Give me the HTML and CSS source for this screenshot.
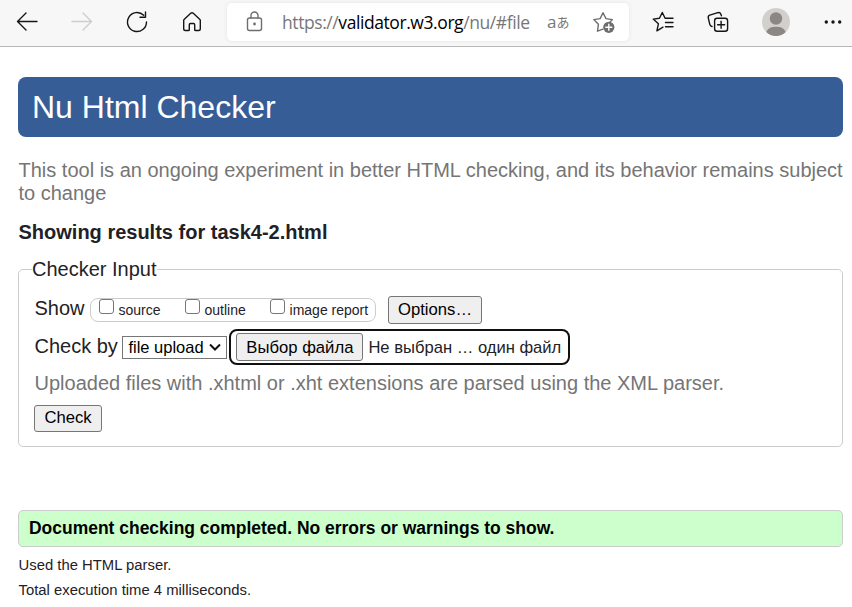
FILE: index.html
```html
<!DOCTYPE html>
<html lang="en">
<head>
<meta charset="utf-8">
<title>Nu Html Checker</title>
<link rel="stylesheet" href="styles.css">
</head>
<body>
<header class="toolbar">
  <nav class="nav">
    <svg class="icon" viewBox="0 0 24 24"><path d="M22 11.5H2.5M11 3l-8.500 8.500L11 20"/></svg>
    <svg class="icon faded" viewBox="0 0 24 24"><path d="M2 11.500h19.500M13 3l8.500 8.500L13 20"/></svg>
    <svg class="icon" viewBox="0 0 24 24"><path d="M21.500 12a9.500 9.500 0 1 1-2.800-6.700M20.500 2v5.200h-5.500"/></svg>
    <svg class="icon" viewBox="0 0 24 24"><path d="M3.700 10.500q0-.8.6-1.300L11 3.100q1-.8 2 0l6.700 6.100q.6.500.6 1.300V19q0 1.500-1.500 1.500H15.500q-.8 0-.8-.8v-5q0-1.200-1.200-1.200h-3q-1.200 0-1.200 1.200v5q0 .8-.8.8H5.200q-1.500 0-1.500-1.500z"/></svg>
  </nav>
  <div class="address">
    <svg class="icon grey" viewBox="0 0 24 24"><rect x="4.500" y="8" width="14" height="12.500" rx="2"/><path d="M8 8V5.500a3.500 3.500 0 0 1 7 0V8"/><circle class="solid" cx="11.500" cy="14" r="1.400"/></svg>
    <span class="url"><span>https://</span><b>validator.w3.org</b><span>/nu/#file</span></span>
    <span class="translate"><span>a</span><span class="kana">あ</span></span>
    <svg class="icon grey star" viewBox="0 0 24 24"><path d="M11 19.200l-5.500 2 .9-6.900L1.800 9.600l6.300-1L11 2.700l3 5.900 6.400 1-3 3.100"/><circle class="solid" cx="16.800" cy="17.300" r="5.600"/><path class="plus" d="M16.800 14.300v6M13.800 17.300h6"/></svg>
  </div>
  <div class="actions">
    <svg class="icon" viewBox="0 0 24 24"><path d="M12 17.200l-6.100 3.600 1.500-7L2.200 9.100l6.200-.8L11.300 2.500l2.800 5.800H22M14.500 12.500H22M14.500 16.700H22"/></svg>
    <svg class="icon" viewBox="0 0 24 24"><rect x="8.600" y="8.200" width="13" height="13" rx="2.500"/><path d="M15.100 11.200v7M11.600 14.700h7M6 16.500q-1.800-.5-2.200-2.100L2.300 8Q1.800 6 3.800 5.200l8-2.500q2.200-.6 3 1.400l.6 1.700"/></svg>
    <svg class="avatar" viewBox="0 0 28 28"><circle cx="14" cy="14" r="14" fill="#d2d0cc"/><circle cx="14" cy="10.500" r="6.200" fill="#8b8784"/><path d="M4.300 24a10 7 0 0 1 19.400 0A14 14 0 0 1 4.300 24z" fill="#8b8784"/></svg>
    <svg class="icon more" viewBox="0 0 24 24"><g class="solid"><circle cx="5.300" cy="12" r="1.700"/><circle cx="12" cy="12" r="1.700"/><circle cx="18.700" cy="12" r="1.700"/></g></svg>
  </div>
</header>
<main>
  <h1>Nu Html Checker</h1>
  <p class="intro">This tool is an ongoing experiment in better HTML checking, and its behavior remains subject to change</p>
  <h2>Showing results for task4-2.html</h2>
  <fieldset>
    <legend>Checker Input</legend>
    <div class="row show">
      <span class="label">Show</span>
      <div class="checks">
        <label><input type="checkbox">source</label>
        <label><input type="checkbox">outline</label>
        <label><input type="checkbox">image report</label>
      </div>
      <button class="options">Options…</button>
    </div>
    <div class="row by">
      <span class="label">Check by</span>
      <div class="select">file upload<svg viewBox="0 0 12 8"><path d="M1 1.500l5 5 5-5"/></svg></div>
      <div class="file"><button>Выбор файла</button><span>Не выбран … один файл</span></div>
    </div>
    <p class="hint">Uploaded files with .xhtml or .xht extensions are parsed using the XML parser.</p>
    <button class="check">Check</button>
  </fieldset>
  <p class="success">Document checking completed. No errors or warnings to show.</p>
  <p class="stat">Used the HTML parser.</p>
  <p class="stat">Total execution time 4 milliseconds.</p>
</main>
</body>
</html>
```
FILE: styles.css
```css
* { box-sizing: border-box; }
body { margin: 0; height: 607px; overflow: hidden; background: #fff; color: #1f2126; font-family: "Liberation Sans", Arial, sans-serif; font-size: 20px; line-height: 23px; }
h1, h2, p, fieldset, legend { margin: 0; padding: 0; font-size: inherit; }
.toolbar { height: 47px; padding: 3px 7px 0 15px; display: flex; background: #f7f7f7; border-bottom: 1px solid #b8b8b8; }
.nav, .actions { display: flex; align-items: center; height: 38px; }
.nav { gap: 31px; }
.icon { flex: none; width: 24px; height: 24px; fill: none; stroke: #151515; stroke-width: 1.4; stroke-linecap: round; stroke-linejoin: round; }
.faded { stroke: #cdcdcd; }
.grey { stroke: #6e6e6e; }
.solid { fill: #151515; stroke: none; }
.grey .solid { fill: #6e6e6e; }
.grey .plus { stroke: #fff; }
.address { display: flex; align-items: center; width: 402px; height: 38px; margin-left: 23px; padding-left: 16px; border-radius: 5px; background: #fff; box-shadow: 0 0 4px #e4e4e4; }
.url { width: 248px; margin-left: 15px; color: #777; font: 17.500px/24px "Open Sans", "Noto Sans", sans-serif; letter-spacing: -0.420px; white-space: nowrap; }
.url b { color: #000; font-weight: 400; }
.translate { display: flex; align-items: center; width: 22px; margin-left: 17px; color: #777; font: 17px/22px "Open Sans", sans-serif; }
.kana { font: 13px/20px "Noto Sans CJK JP", sans-serif; }
.star { margin-left: 23px; }
.actions { margin-left: 22px; }
.actions .icon + .icon { margin-left: 31px; }
.avatar { width: 28px; height: 28px; margin-left: 32px; }
.more { margin-left: 31px; }
main { padding: 30px 9px 0 18px; }
h1 { height: 60px; padding-left: 14px; border-radius: 8px; background: #365d95; color: #fff; font-size: 32px; font-weight: 400; line-height: 60px; }
.intro { width: 830px; margin-top: 22px; padding-left: 0.500px; color: #757575; }
h2 { margin-top: 16px; padding-left: 0.500px; font-weight: 700; }
fieldset { height: 189px; margin-top: 14px; padding: 0 15px; border: 1px solid #ccc; border-radius: 5px; }
legend { margin-left: -2px; height: 23px; }
.row { display: flex; align-items: center; }
.show { height: 28px; margin-top: 15px; }
.label { padding: 0 0 2px 0.500px; }
.show .label { padding-bottom: 4px; }
.checks { display: flex; width: 286px; height: 24px; margin: 0 12px 0 5.500px; padding-left: 8px; border: 1px solid #ccc; border-radius: 8px; font-size: 14px; }
.checks label { display: flex; line-height: 23px; width: 86px; white-space: nowrap; }
.checks label:nth-child(2) { width: 85px; }
.checks input { appearance: none; flex: none; width: 15px; height: 15px; margin: 0 4.500px 0 0; border: 1px solid #767676; border-radius: 3px; background: #fff; }
button { height: 28px; padding: 0; border: 1px solid #767676; border-radius: 3px; background: #efefef; color: #000; font: 16.670px/24px "Liberation Sans", Arial, sans-serif; white-space: nowrap; }
.options { width: 94px; }
.by { height: 36px; margin-top: 5px; }
.select { display: flex; align-items: center; justify-content: space-between; width: 105px; height: 23px; margin: 0 2px 0 4.500px; padding: 0 5px; border: 1px solid #767676; color: #000; font-size: 16.500px; }
.select svg { width: 12px; height: 8px; fill: none; stroke: #111; stroke-width: 2; }
.file { display: flex; align-items: center; width: 341px; height: 36px; padding-left: 5px; border: 2px solid #101010; border-radius: 8px; font-size: 16.600px; white-space: nowrap; }
.file button { width: 127px; margin-right: 5px; padding-top: 2px; }
.hint { margin: 7px 0 10px 0.500px; color: #757575; }
.check { display: block; width: 68px; height: 27px; padding-bottom: 2px; }
.success { height: 37px; margin-top: 63px; padding-left: 10px; border: 1px solid #ccc; border-radius: 5px; background: #cfc; color: #000; font-size: 17.480px; font-weight: 700; line-height: 34px; }
.stat { margin-top: 6px; padding-left: 0.500px; font-size: 14.850px; line-height: 24px; }
.stat + .stat { margin-top: 1px; }
```
